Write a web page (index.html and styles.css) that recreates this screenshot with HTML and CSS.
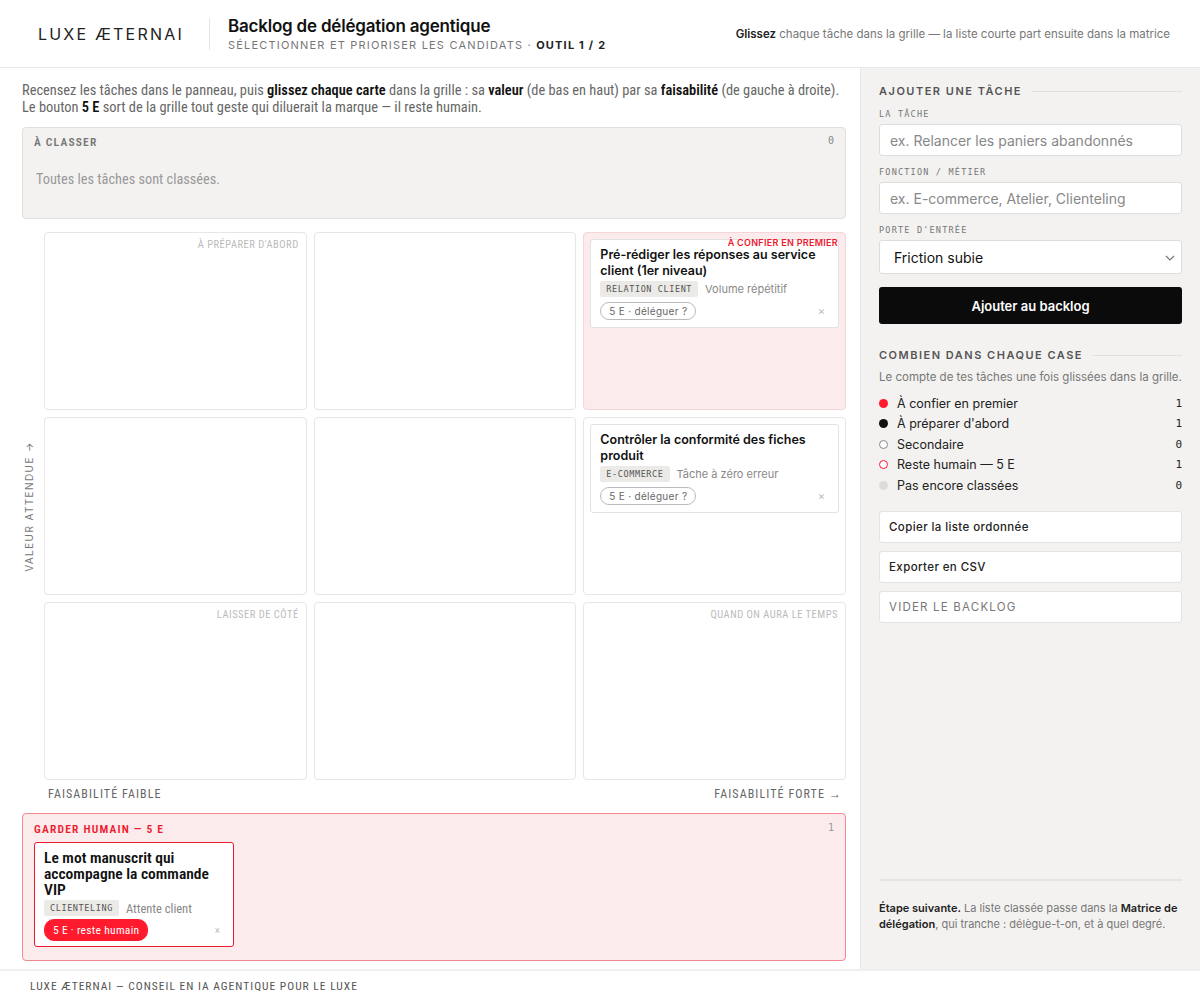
FILE: index.html
```html
<!DOCTYPE html>
<html lang="fr">
<head>
  <meta charset="UTF-8">
  <meta name="viewport" content="width=device-width, initial-scale=1">
  <title>Backlog de délégation agentique</title>
  <link rel="stylesheet" href="styles.css">
</head>
<body>

  <!-- En-tête -->
  <header class="topbar">
    <div class="brand">LUXE ÆTERNAI</div>
    <div class="titles">
      <h1>Backlog de délégation agentique</h1>
      <div class="subtitle">Sélectionner et prioriser les candidats · <b>Outil 1 / 2</b></div>
    </div>
    <div class="hint"><b>Glissez</b> chaque tâche dans la grille — la liste courte part ensuite dans la matrice</div>
  </header>

  <div class="layout">
    <main class="board">
      <p class="intro">Recensez les tâches dans le panneau, puis <b>glissez chaque carte</b> dans la grille : sa <b>valeur</b> (de bas en haut) par sa <b>faisabilité</b> (de gauche à droite).<br>Le bouton <b>5 E</b> sort de la grille tout geste qui diluerait la marque — il reste humain.</p>

      <section class="tray">
        <div class="tray-head"><span>À classer</span><span class="num">0</span></div>
        <div class="tray-empty">Toutes les tâches sont classées.</div>
      </section>

      <!-- Matrice valeur x faisabilité -->
      <section class="matrix">
        <div class="axis-y">Valeur attendue →</div>

        <div class="cell"><span class="cell-label">À préparer d'abord</span></div>
        <div class="cell"></div>
        <div class="cell hot">
          <span class="cell-label">À confier en premier</span>
          <div class="card">
            <div class="card-title">Pré-rédiger les réponses au service client (1er niveau)</div>
            <div class="card-meta"><span class="tag">Relation client</span><span class="note">Volume répétitif</span></div>
            <div class="card-foot"><span class="pill">5 E · déléguer ?</span><span class="remove">×</span></div>
          </div>
        </div>

        <div class="cell"></div>
        <div class="cell"></div>
        <div class="cell">
          <div class="card">
            <div class="card-title">Contrôler la conformité des fiches produit</div>
            <div class="card-meta"><span class="tag">E-commerce</span><span class="note">Tâche à zéro erreur</span></div>
            <div class="card-foot"><span class="pill">5 E · déléguer ?</span><span class="remove">×</span></div>
          </div>
        </div>

        <div class="cell"><span class="cell-label">Laisser de côté</span></div>
        <div class="cell"></div>
        <div class="cell"><span class="cell-label">Quand on aura le temps</span></div>

        <div class="axis-x"><span>Faisabilité faible</span><span>Faisabilité forte →</span></div>
      </section>

      <section class="human">
        <div class="tray-head"><span>Garder humain — 5 E</span><span class="num">1</span></div>
        <div class="card card-human">
          <div class="card-title">Le mot manuscrit qui accompagne la commande VIP</div>
          <div class="card-meta"><span class="tag">Clienteling</span><span class="note">Attente client</span></div>
          <div class="card-foot"><span class="pill pill-red">5 E · reste humain</span><span class="remove">×</span></div>
        </div>
      </section>
    </main>

    <aside class="panel">
      <h2 class="panel-title">Ajouter une tâche</h2>
      <label class="field-label">La tâche</label>
      <input class="field" type="text" placeholder="ex. Relancer les paniers abandonnés">
      <label class="field-label">Fonction / métier</label>
      <input class="field" type="text" placeholder="ex. E-commerce, Atelier, Clienteling">
      <label class="field-label">Porte d'entrée</label>
      <div class="select-wrap">
        <select class="field select">
          <option>Friction subie</option>
        </select>
        <svg class="chevron" width="10" height="6" viewBox="0 0 10 6"><path d="M1 1l4 4 4-4" fill="none" stroke="#777" stroke-width="1.2"/></svg>
      </div>
      <button class="btn-primary">Ajouter au backlog</button>

      <h2 class="panel-title counts-title">Combien dans chaque case</h2>
      <p class="panel-sub">Le compte de tes tâches une fois glissées dans la grille.</p>
      <ul class="legend">
        <li><span class="dot dot-red"></span>À confier en premier<span class="num">1</span></li>
        <li><span class="dot dot-black"></span>À préparer d'abord<span class="num">1</span></li>
        <li><span class="dot dot-ring"></span>Secondaire<span class="num">0</span></li>
        <li><span class="dot dot-ring-red"></span>Reste humain — 5 E<span class="num">1</span></li>
        <li><span class="dot dot-grey"></span>Pas encore classées<span class="num">0</span></li>
      </ul>

      <div class="actions">
        <button class="btn">Copier la liste ordonnée</button>
        <button class="btn">Exporter en CSV</button>
        <button class="btn btn-muted">Vider le backlog</button>
      </div>

      <p class="next"><b>Étape suivante.</b> La liste classée passe dans la <b>Matrice de délégation</b>, qui tranche : délègue-t-on, et à quel degré.</p>
    </aside>
  </div>

  <footer class="footer">LUXE ÆTERNAI — CONSEIL EN IA AGENTIQUE POUR LE LUXE</footer>

</body>
</html>
```

FILE: styles.css
```css
/* Basis */
html, body {
  margin: 0;
  padding: 0;
  background: #fff;
}
body {
  font-family: 'Inter', 'Liberation Sans', sans-serif;
  color: #111;
}

/* En-tête */
.topbar {
  height: 68px;
  box-sizing: border-box;
  display: flex;
  align-items: center;
  padding: 0 30px 0 38px;
  border-bottom: 1px solid #e8e8e8;
}
.brand {
  font-size: 16px;
  letter-spacing: 2.2px;
  color: #222;
  padding-right: 25px;
  border-right: 1px solid #e4e4e4;
  line-height: 32px;
}
.titles {
  padding-left: 18px;
}
.titles h1 {
  margin: 0;
  font-size: 17px;
  font-weight: 600;
  letter-spacing: -0.2px;
  line-height: 22px;
}
.subtitle {
  font-size: 11px;
  letter-spacing: 1.2px;
  text-transform: uppercase;
  color: #777;
  margin-top: 1px;
}
.subtitle b {
  color: #222;
}
.hint {
  margin-left: auto;
  font-size: 11.5px;
  color: #777;
}
.hint b {
  color: #222;
  font-weight: 600;
}

/* Zweispaltiges Layout */
.layout {
  display: grid;
  grid-template-columns: 860px 340px;
}

.board {
  padding: 14px 14px 8px 22px;
  font-family: 'Roboto Condensed', 'Roboto', sans-serif;
  font-stretch: 75%;
}
.intro {
  margin: 0 0 11px;
  font-size: 14.4px;
  line-height: 17px;
  color: #666;
}
.intro b {
  color: #111;
  font-weight: 600;
}

/* Ablage */
.tray {
  background: #f3f2f0;
  border: 1px solid #e0dfdc;
  border-radius: 4px;
  height: 92px;
  box-sizing: border-box;
  padding: 7px 11px;
}
.tray-head {
  display: flex;
  justify-content: space-between;
  font-size: 11.5px;
  font-weight: 600;
  letter-spacing: 1.2px;
  text-transform: uppercase;
  color: #777;
}
.tray-head .num {
  font-family: 'DejaVu Sans Mono', monospace;
  font-stretch: normal;
  font-weight: normal;
  font-size: 10px;
  letter-spacing: 0;
  color: #888;
}
.tray-empty {
  margin-top: 22px;
  padding-left: 2px;
  font-size: 14.3px;
  color: #999;
}

/* Matrix */
.matrix {
  margin-top: 13px;
  display: grid;
  grid-template-columns: 15px repeat(3, 1fr);
  grid-template-rows: repeat(3, 178px) auto;
  gap: 7px;
}
.axis-y {
  grid-row: 1 / 4;
  grid-column: 1;
  writing-mode: vertical-rl;
  transform: rotate(180deg);
  align-self: center;
  justify-self: center;
  font-family: 'Inter', sans-serif;
  font-stretch: normal;
  font-size: 10px;
  letter-spacing: 1.4px;
  text-transform: uppercase;
  color: #777;
  margin-left: -2px;
}
.cell {
  position: relative;
  border: 1px solid #e6e6e6;
  border-radius: 4px;
  padding: 6px;
  background: #fff;
}
.cell.hot {
  background: #fcebec;
  border-color: #f4d6d8;
}
.cell-label {
  position: absolute;
  top: 5px;
  right: 7px;
  font-size: 10.5px;
  letter-spacing: 0.5px;
  text-transform: uppercase;
  color: #bbb;
  z-index: 2;
}
.cell.hot .cell-label {
  font-family: 'Inter', sans-serif;
  font-stretch: normal;
  font-size: 9px;
  font-weight: 600;
  letter-spacing: 0.3px;
  color: #ee1a2e;
  top: 4px;
  right: 7px;
}
.axis-x {
  grid-column: 2 / 5;
  display: flex;
  justify-content: space-between;
  padding: 0 4px;
  font-size: 12px;
  letter-spacing: 1.1px;
  text-transform: uppercase;
  color: #666;
}

/* Karten */
.card {
  background: #fff;
  border: 1px solid #e2e2e2;
  border-radius: 3px;
  padding: 7px 9px 7px;
  font-family: 'Inter', sans-serif;
  font-stretch: normal;
}
.card-title {
  font-size: 12.5px;
  font-weight: 600;
  line-height: 16px;
  color: #111;
}
.card-meta {
  display: flex;
  align-items: center;
  gap: 7px;
  margin-top: 2px;
}
.tag {
  font-family: 'DejaVu Sans Mono', monospace;
  font-stretch: normal;
  font-size: 8.5px;
  letter-spacing: 0.6px;
  text-transform: uppercase;
  background: #ebeae6;
  color: #555;
  padding: 3px 6px;
  border-radius: 2px;
}
.note {
  font-size: 11px;
  color: #888;
}
.card-foot {
  display: flex;
  justify-content: space-between;
  align-items: center;
  margin-top: 5px;
}
.pill {
  font-size: 10px;
  letter-spacing: 0.3px;
  color: #666;
  border: 1px solid #bbb;
  border-radius: 10px;
  padding: 2px 8px;
}
.remove {
  color: #bbb;
  font-size: 11px;
  padding-right: 4px;
}

/* Menschlich behalten */
.human {
  margin-top: 12px;
  background: #fcebec;
  border: 1px solid #f48890;
  border-radius: 4px;
  padding: 8px 11px 13px;
  height: 148px;
  box-sizing: border-box;
}
.human .tray-head {
  color: #ee1a2e;
}
.human .tray-head .num {
  color: #999;
  font-size: 10px;
}
.card-human {
  width: 200px;
  box-sizing: border-box;
  margin-top: 6px;
  padding-bottom: 5px;
  border-color: #ee1a2e;
  font-family: 'Roboto Condensed', 'Roboto', sans-serif;
  font-stretch: 75%;
}
.card-human .card-title {
  font-size: 15.5px;
  font-weight: 600;
  line-height: 16px;
}
.card-human .card-meta {
  margin-top: 2px;
}
.card-human .card-foot {
  margin-top: 3px;
}
.card-human .note {
  font-size: 12.5px;
}
.pill-red {
  background: #ff1a2d;
  border-color: #ff1a2d;
  color: #fff;
  font-size: 11.5px;
  padding: 3px 8px;
}

/* Seitenleiste */
.panel {
  background: #f3f2f0;
  border-left: 1px solid #e6e6e6;
  padding: 16px 18px 0;
  display: flex;
  flex-direction: column;
}
.panel-title {
  display: flex;
  align-items: center;
  gap: 10px;
  margin: 0;
  font-size: 11px;
  font-weight: 600;
  letter-spacing: 1.5px;
  text-transform: uppercase;
  color: #555;
}
.panel-title::after {
  content: '';
  flex: 1;
  height: 1px;
  background: #e2e1de;
}
.field-label {
  display: block;
  font-family: 'DejaVu Sans Mono', monospace;
  font-size: 8.5px;
  line-height: 10px;
  letter-spacing: 1.2px;
  text-transform: uppercase;
  color: #777;
  margin: 11px 0 5px;
}
.field {
  display: block;
  width: 100%;
  box-sizing: border-box;
  height: 32px;
  border: 1px solid #ddd;
  border-radius: 3px;
  background: #fff;
  padding: 0 10px;
  font-family: 'Inter', sans-serif;
  font-size: 14px;
  color: #111;
}
.field::placeholder {
  color: #888;
}
.select-wrap {
  position: relative;
}
.select {
  appearance: none;
  height: 34px;
  padding: 0 14px;
}
.chevron {
  position: absolute;
  right: 7px;
  top: 15px;
}
.btn-primary {
  margin-top: 13px;
  height: 37px;
  border: 0;
  border-radius: 3px;
  background: #0b0b0b;
  color: #fff;
  font-family: 'Inter', sans-serif;
  font-size: 13px;
  font-weight: 600;
}
.counts-title {
  margin-top: 24px;
}
.panel-sub {
  margin: 8px 0 9px;
  font-size: 11.5px;
  color: #777;
}
.legend {
  list-style: none;
  margin: 0;
  padding: 0;
}
.legend li {
  display: flex;
  align-items: center;
  height: 20.5px;
  font-size: 12.5px;
  color: #222;
}
.legend .num {
  margin-left: auto;
  font-family: 'DejaVu Sans Mono', monospace;
  font-size: 11px;
}
.dot {
  width: 9px;
  height: 9px;
  box-sizing: border-box;
  border-radius: 50%;
  margin: 0 9px 0 0;
}
.dot-red { background: #ff1a2d; }
.dot-black { background: #111; }
.dot-ring { border: 1.5px solid #888; background: #fff; }
.dot-ring-red { border: 1.5px solid #ff1a2d; background: #fff; }
.dot-grey { background: #dcdcda; }

.actions {
  display: flex;
  flex-direction: column;
  gap: 8px;
  margin-top: 15px;
}
.btn {
  height: 32px;
  text-align: left;
  padding: 0 9px;
  background: #fff;
  border: 1px solid #e3e3e3;
  border-radius: 3px;
  font-family: 'Inter', sans-serif;
  font-size: 11.5px;
  font-weight: 500;
  letter-spacing: 0.4px;
  color: #222;
}
.btn-muted {
  font-weight: 400;
  letter-spacing: 1.2px;
  text-transform: uppercase;
  color: #777;
}
.next {
  margin: auto 0 0;
  padding: 19px 0 37px;
  border-top: 2px solid #e6e5e2;
  font-size: 11px;
  line-height: 16px;
  color: #777;
}
.next b {
  color: #222;
  font-weight: 600;
}

/* Fußzeile */
.footer {
  border-top: 2px solid #efefef;
  padding: 8px 30px;
  font-family: 'Roboto Condensed', 'Roboto', sans-serif;
  font-stretch: 75%;
  font-size: 11.5px;
  letter-spacing: 1px;
  color: #555;
}
```
